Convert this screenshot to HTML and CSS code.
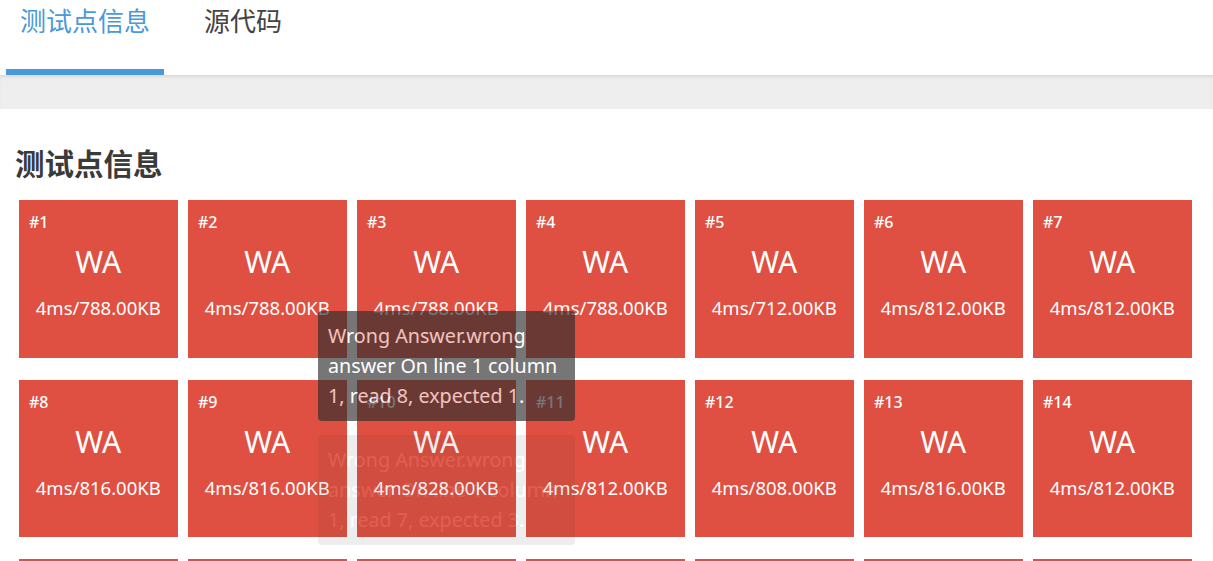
FILE: index.html
```html
<!DOCTYPE html>
<html>
<head>
  <meta charset="utf-8">
  <title>测试点信息</title>
  <link rel="stylesheet" href="styles.css">
</head>
<body>
  <div class="tab-bar">
    <div class="tab active">测试点信息</div>
    <div class="tab">源代码</div>
  </div>
  <div class="tab-strip"></div>

  <div class="content">
    <h2>测试点信息</h2>
    <div class="case-grid">
      <div class="case"><div class="case-no">#1</div><div class="case-status">WA</div><div class="case-usage">4ms/788.00KB</div></div>
      <div class="case"><div class="case-no">#2</div><div class="case-status">WA</div><div class="case-usage">4ms/788.00KB</div></div>
      <div class="case"><div class="case-no">#3</div><div class="case-status">WA</div><div class="case-usage">4ms/788.00KB</div></div>
      <div class="case"><div class="case-no">#4</div><div class="case-status">WA</div><div class="case-usage">4ms/788.00KB</div></div>
      <div class="case"><div class="case-no">#5</div><div class="case-status">WA</div><div class="case-usage">4ms/712.00KB</div></div>
      <div class="case"><div class="case-no">#6</div><div class="case-status">WA</div><div class="case-usage">4ms/812.00KB</div></div>
      <div class="case"><div class="case-no">#7</div><div class="case-status">WA</div><div class="case-usage">4ms/812.00KB</div></div>
      <div class="case"><div class="case-no">#8</div><div class="case-status">WA</div><div class="case-usage">4ms/816.00KB</div></div>
      <div class="case"><div class="case-no">#9</div><div class="case-status">WA</div><div class="case-usage">4ms/816.00KB</div></div>
      <div class="case"><div class="case-no">#10</div><div class="case-status">WA</div><div class="case-usage">4ms/828.00KB</div></div>
      <div class="case"><div class="case-no">#11</div><div class="case-status">WA</div><div class="case-usage">4ms/812.00KB</div></div>
      <div class="case"><div class="case-no">#12</div><div class="case-status">WA</div><div class="case-usage">4ms/808.00KB</div></div>
      <div class="case"><div class="case-no">#13</div><div class="case-status">WA</div><div class="case-usage">4ms/816.00KB</div></div>
      <div class="case"><div class="case-no">#14</div><div class="case-status">WA</div><div class="case-usage">4ms/812.00KB</div></div>
      <div class="case"><div class="case-no">#15</div><div class="case-status">WA</div><div class="case-usage">4ms/812.00KB</div></div>
      <div class="case"><div class="case-no">#16</div><div class="case-status">WA</div><div class="case-usage">4ms/812.00KB</div></div>
      <div class="case"><div class="case-no">#17</div><div class="case-status">WA</div><div class="case-usage">4ms/812.00KB</div></div>
      <div class="case"><div class="case-no">#18</div><div class="case-status">WA</div><div class="case-usage">4ms/812.00KB</div></div>
      <div class="case"><div class="case-no">#19</div><div class="case-status">WA</div><div class="case-usage">4ms/812.00KB</div></div>
      <div class="case"><div class="case-no">#20</div><div class="case-status">WA</div><div class="case-usage">4ms/812.00KB</div></div>
      <div class="case"><div class="case-no">#21</div><div class="case-status">WA</div><div class="case-usage">4ms/812.00KB</div></div>

      <!-- hover tooltips (one showing, one fading out) -->
      <div class="tip tip-show">Wrong Answer.wrong<br>answer On line 1 column<br>1, read 8, expected 1.</div>
      <div class="tip tip-fade">Wrong Answer.wrong<br>answer On line 1 column<br>1, read 7, expected 3.</div>
    </div>
  </div>
</body>
</html>
```

FILE: styles.css
```css
body {
  margin: 0;
  font-family: "Noto Sans", "Noto Sans CJK SC", sans-serif;
  background-color: #fff;
  color: #333;
}

.tab-bar {
  display: flex;
  height: 75px;
  padding-left: 6px;
  box-sizing: border-box;
}

.tab {
  padding: 2px 14px 0;
  margin-right: 26px;
  font-size: 26px;
  line-height: 36px;
  color: #444;
  font-family: "Noto Sans CJK SC", sans-serif;
}

.tab.active {
  color: #4a99db;
  border-bottom: 6px solid #4a99db;
}

.tab-strip {
  height: 34px;
  background-color: #eeeeee;
  box-shadow: inset 0 3px 4px -2px rgba(0, 0, 0, 0.12);
}

.content {
  padding: 0 15px;
}

h2 {
  margin: 33px 0 0;
  font-family: "Noto Sans CJK SC", sans-serif;
  font-size: 29.5px;
  line-height: 40px;
  font-weight: bold;
  color: #3a3a3a;
}

.case-grid {
  position: relative;
  display: grid;
  grid-template-columns: repeat(7, 158.5px);
  column-gap: 10.5px;
  row-gap: 22px;
  margin-top: 18px;
  padding-left: 4px;
}

.case {
  height: 157.7px;
  padding: 12px 10px 0;
  box-sizing: border-box;
  background-color: #e05042;
  color: #fff;
}

.case-no {
  font-size: 16px;
  line-height: 21px;
  font-weight: 500;
}

.case-status {
  margin-top: 9px;
  font-size: 30px;
  line-height: 40px;
  text-align: center;
}

.case-usage {
  margin-top: 14px;
  font-size: 18.5px;
  line-height: 24px;
  text-align: center;
}

.tip {
  position: absolute;
  left: 303px;
  width: 257px;
  padding: 10px;
  box-sizing: border-box;
  border-radius: 4px;
  background-color: #2e2e2e;
  color: #fff;
  font-size: 19.7px;
  line-height: 30px;
  white-space: nowrap;
}

.tip-show {
  top: 111px;
  opacity: 0.65;
}

.tip-fade {
  top: 235px;
  opacity: 0.08;
}
```
